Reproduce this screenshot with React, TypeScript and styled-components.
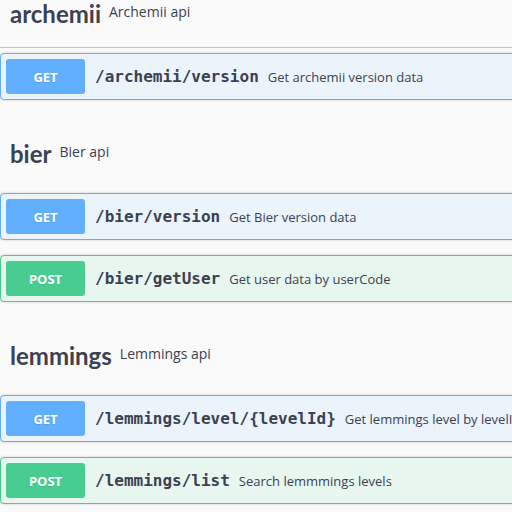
import styled, { createGlobalStyle } from "styled-components";

const GlobalStyle = createGlobalStyle`
  html, body {
    margin: 0;
    background: #fafafa;
    overflow: hidden;
  }
  body {
    font-family: "Open Sans", "Liberation Sans", sans-serif;
    color: #3b4151;
  }
`;

const Page = styled.div`
  width: 640px;
  display: flex;
  flex-direction: column;
`;

const Section = styled.section`
  display: flex;
  flex-direction: column;
  margin-bottom: 25px;
`;

const TagHeader = styled.div<{ $ruled?: boolean }>`
  box-sizing: border-box;
  height: 48px;
  margin-bottom: 5px;
  padding: 2px 20px 0 10px;
  display: flex;
  align-items: flex-start;
  border-bottom: 1px solid ${(p) => (p.$ruled ? "rgba(59,65,81,0.3)" : "transparent")};
`;

const TagTitle = styled.h3`
  margin: 0;
  height: 24px;
  display: flex;
  align-items: center;
  font-family: Lato, "Open Sans", sans-serif;
  font-size: 24px;
  line-height: 24px;
  font-weight: 700;
  color: #3b4151;
`;

const TagNote = styled.small`
  padding: 0 8px;
  line-height: 20px;
  font-size: 14px;
  font-weight: 400;
  font-family: "Open Sans", sans-serif;
`;

const Block = styled.div<{ $method: "get" | "post" }>`
  box-sizing: border-box;
  height: 47px;
  margin-bottom: 15px;
  padding: 5px;
  display: flex;
  align-items: center;
  border: 1px solid ${(p) => (p.$method === "get" ? "#61affe" : "#49cc90")};
  border-radius: 4px;
  background: ${(p) => (p.$method === "get" ? "#ebf3fb" : "#e8f6f0")};
  box-shadow: 0 0 3px rgba(0, 0, 0, 0.19);
`;

const Method = styled.span<{ $method: "get" | "post" }>`
  flex: none;
  width: 79px;
  height: 35px;
  display: flex;
  align-items: center;
  justify-content: center;
  border-radius: 3px;
  background: ${(p) => (p.$method === "get" ? "#61affe" : "#49cc90")};
  color: #fff;
  font-family: "Open Sans", sans-serif;
  font-size: 13px;
  font-weight: 700;
  text-shadow: 0 1px 0 rgba(0, 0, 0, 0.1);
`;

const Path = styled.span`
  padding: 0 9px 0 10px;
  font-family: "DejaVu Sans Mono", "Liberation Mono", monospace;
  font-size: 16px;
  font-weight: 700;
  color: #3b4151;
  white-space: nowrap;
`;

const Summary = styled.span`
  font-size: 13px;
  color: #3b4151;
  white-space: nowrap;
`;

type Op = { method: "get" | "post"; path: string; text: string };
type Tag = { name: string; note: string; ops: Op[] };

const tags: Tag[] = [
  {
    name: "archemii",
    note: "Archemii api",
    ops: [{ method: "get", path: "/archemii/version", text: "Get archemii version data" }],
  },
  {
    name: "bier",
    note: "Bier api",
    ops: [
      { method: "get", path: "/bier/version", text: "Get Bier version data" },
      { method: "post", path: "/bier/getUser", text: "Get user data by userCode" },
    ],
  },
  {
    name: "lemmings",
    note: "Lemmings api",
    ops: [
      { method: "get", path: "/lemmings/level/{levelId}", text: "Get lemmings level by levelId" },
      { method: "post", path: "/lemmings/list", text: "Search lemmmings levels" },
    ],
  },
];

function App() {
  return (
    <Page>
      <GlobalStyle />
      {tags.map((tag, i) => (
        <Section key={tag.name}>
          <TagHeader $ruled={i === 0}>
            <TagTitle>{tag.name}</TagTitle>
            <TagNote>{tag.note}</TagNote>
          </TagHeader>
          {tag.ops.map((op) => (
            <Block key={op.path} $method={op.method}>
              <Method $method={op.method}>{op.method.toUpperCase()}</Method>
              <Path>{op.path}</Path>
              <Summary>{op.text}</Summary>
            </Block>
          ))}
        </Section>
      ))}
    </Page>
  );
}

export default App;
